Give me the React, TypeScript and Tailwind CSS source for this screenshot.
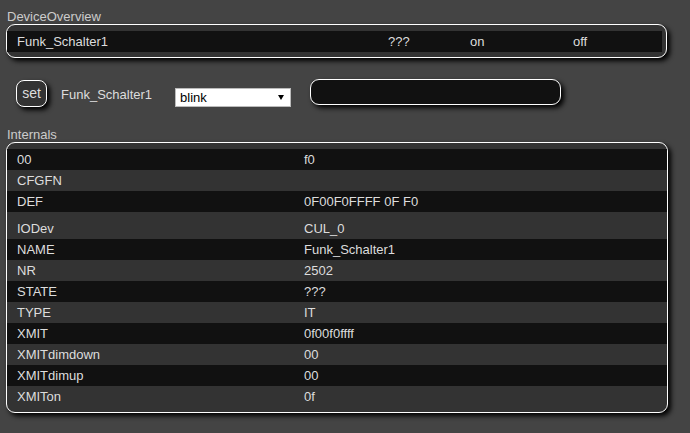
const internals: [string, string][] = [
  ["00", "f0"],
  ["CFGFN", ""],
  ["DEF", "0F00F0FFFF 0F F0"],
  ["IODev", "CUL_0"],
  ["NAME", "Funk_Schalter1"],
  ["NR", "2502"],
  ["STATE", "???"],
  ["TYPE", "IT"],
  ["XMIT", "0f00f0ffff"],
  ["XMITdimdown", "00"],
  ["XMITdimup", "00"],
  ["XMITon", "0f"],
]

export default function App() {
  return (
    <div
      className="w-[690px] h-[433px] overflow-hidden bg-[#444] text-[13px] text-[#ddd]"
      style={{ fontFamily: '"Liberation Sans", Arial, sans-serif' }}
    >
      <div className="pl-[7px] pt-[9px] h-[24px] leading-[15px] text-[#ccc]">DeviceOverview</div>

      <div className="ml-[6px] w-[661px] h-[34px] rounded-[9px] border border-white bg-[#333] pt-[6px] pb-[5px] shadow-[3px_3px_5px_#000]">
        <div className="flex h-[21px] items-center bg-[#111] mr-[4px]">
          <div className="w-[381px] pl-[10px]">Funk_Schalter1</div>
          <div className="w-[82px]">???</div>
          <div className="w-[103px]">on</div>
          <div>off</div>
        </div>
      </div>

      <div className="flex items-center h-[28px] mt-[21px]">
        <button className="ml-[16px] w-[31px] h-[27px] rounded-[8px] border border-white bg-[#333] text-[#ddd] text-[14px] leading-none shadow-[3px_3px_5px_#000]">
          set
        </button>
        <div className="ml-[14px] pt-[4px]">Funk_Schalter1</div>
        <div className="ml-[23px] mt-[9px] w-[116px] h-[19px] bg-white border border-[#bbb] flex items-center justify-between pl-[4px] pr-[6px] text-black">
          <span>blink</span>
          <svg width="6" height="5" viewBox="0 0 6 5">
            <path d="M0 0 H6 L3 5 Z" fill="#000" />
          </svg>
        </div>
        <div className="ml-[19px] -mt-[2px] w-[251px] h-[26px] rounded-[9px] border border-white bg-[#111] shadow-[3px_3px_5px_#000]" />
      </div>

      <div className="pl-[7px] mt-[20px] h-[15px] leading-[15px] text-[#ccc]">Internals</div>

      <div className="ml-[6px] w-[662px] rounded-[9px] border border-white bg-[#333] pt-[6px] pb-[5px] shadow-[3px_3px_5px_#000]">
        {internals.map(([name, value], i) => (
          <div
            key={name}
            className={
              (i % 2 === 0 ? "bg-[#111] " : "") +
              (name === "IODev" ? "h-[27px] pt-[6px] " : "h-[21px] ") +
              "flex items-center"
            }
          >
            <div className="w-[297px] pl-[10px]">{name}</div>
            <div>{value}</div>
          </div>
        ))}
      </div>
    </div>
  )
}
